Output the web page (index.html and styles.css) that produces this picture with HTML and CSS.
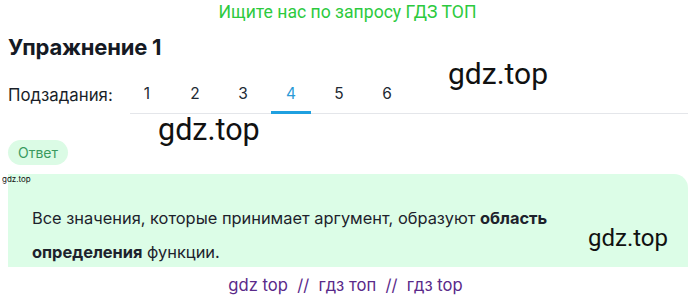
FILE: index.html
```html
<!DOCTYPE html>
<html lang="ru">
<head>
<meta charset="utf-8">
<link rel="stylesheet" href="styles.css">
</head>
<body>
<div class="promo">Ищите нас по запросу ГДЗ ТОП</div>
<h1 class="title">Упражнение 1</h1>
<div class="subtasks">
  <span class="label">Подзадания:</span>
  <nav class="tabs">
    <a class="tab">1</a>
    <a class="tab">2</a>
    <a class="tab">3</a>
    <a class="tab active">4</a>
    <a class="tab">5</a>
    <a class="tab">6</a>
  </nav>
  <span class="wm wm-top">gdz.top</span>
</div>
<div class="answer-row">
  <span class="pill">Ответ</span>
  <span class="wm wm-mid">gdz.top</span>
</div>
<div class="answer">
  <span class="wm-small">gdz.top</span>
  <div class="card">
    <p class="text"><span>Все значения, которые принимает аргумент, образуют</span> <b>область</b><br><b>определения</b> <span>функции.</span></p>
    <span class="wm wm-card">gdz.top</span>
  </div>
</div>
<div class="footer">gdz top &nbsp;//&nbsp; гдз топ &nbsp;//&nbsp; гдз top</div>
</body>
</html>
```
FILE: styles.css
```css
html, body {
  margin: 0;
  padding: 0;
  background: #fff;
  width: 695px;
  height: 299px;
  overflow: hidden;
  font-family: Inter, Roboto, sans-serif;
  color: #1f2430;
}
.promo {
  font-family: Roboto, sans-serif;
  text-align: center;
  color: #2cca3e;
  font-size: 17.6px;
  line-height: 20px;
  padding-top: 2px;
}
.title {
  margin: 12px 0 0 8px;
  font-size: 22px;
  line-height: 26px;
  font-weight: 700;
  letter-spacing: -0.2px;
  color: #151a24;
}
.subtasks {
  position: relative;
  display: flex;
  align-items: flex-end;
  margin-top: 14px;
  height: 40px;
}
.label {
  margin-left: 8px;
  width: 122px;
  font-size: 16.8px;
  line-height: 20px;
  padding-bottom: 9px;
  color: #1a1f29;
}
.tabs {
  display: flex;
  flex: 1;
  margin-right: 7px;
  border-bottom: 1px solid #e4e6ea;
}
.tab {
  width: 40px;
  margin: 0 4px -1px;
  text-align: center;
  font-size: 15.5px;
  line-height: 20px;
  padding-bottom: 7px;
  color: #222933;
  border-bottom: 3px solid transparent;
}
.tab:first-child { margin-left: -3px; }
.tab.active {
  color: #2a9ad6;
  border-bottom-color: #1fa0e0;
}
.wm {
  font-family: Roboto, sans-serif;
  color: #111;
  font-weight: 400;
}
.wm-top {
  position: absolute;
  left: 448px;
  top: -16px;
  font-size: 30px;
  line-height: 32px;
}
.answer-row {
  position: relative;
  height: 60px;
}
.pill {
  position: absolute;
  left: 8px;
  top: 26px;
  display: inline-block;
  background: #dbfbe5;
  color: #3a9a5e;
  font-size: 14px;
  line-height: 25px;
  padding: 0 10px;
  border-radius: 13px;
}
.wm-mid {
  position: absolute;
  left: 158px;
  top: 0;
  font-size: 30.5px;
  line-height: 32px;
}
.answer {
  position: relative;
}
.wm-small {
  position: absolute;
  left: 2px;
  top: 0;
  font-size: 8px;
  line-height: 10px;
  color: #111;
  z-index: 1;
}
.card {
  position: relative;
  margin: 0 7px 0 8px;
  background: #dcfde7;
  border-radius: 0 14px 0 0;
  padding: 27px 80px 0 24px;
  height: 66px;
}
.text {
  margin: 0;
  font-size: 16.4px;
  line-height: 34px;
  color: #1d222c;
}
.text b { font-weight: 700; }
.wm-card {
  position: absolute;
  left: 580px;
  top: 50px;
  font-size: 24px;
  line-height: 28px;
}
.footer {
  text-align: center;
  color: #5a2a8a;
  font-size: 16.6px;
  line-height: 20px;
  margin-top: 8px;
  padding-right: 4px;
}
```
